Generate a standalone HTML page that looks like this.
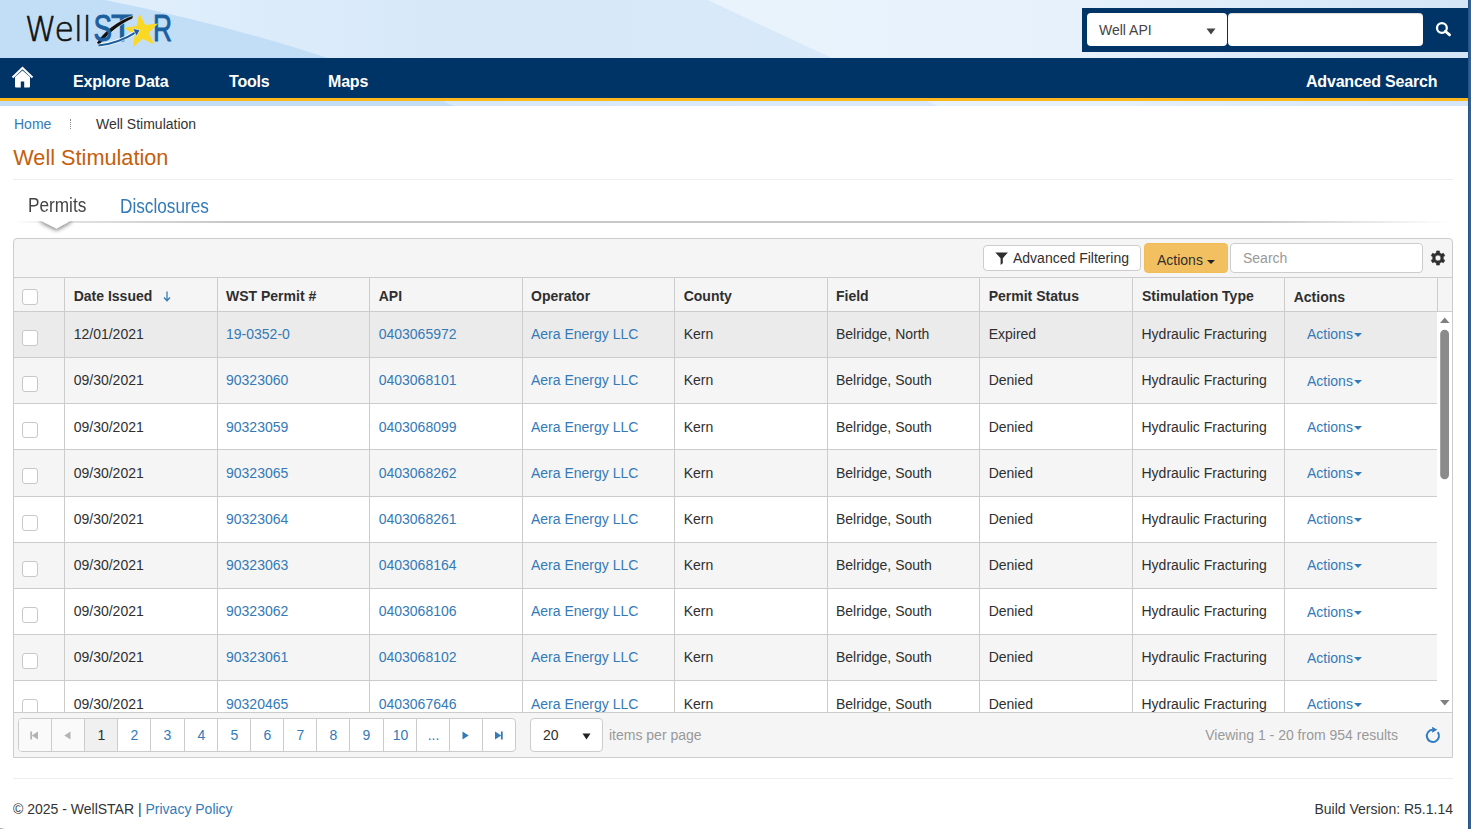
<!DOCTYPE html>
<html lang="en">
<head>
<meta charset="utf-8">
<title>Well Stimulation - WellSTAR</title>
<style>
*{box-sizing:border-box}
html,body{margin:0;padding:0}
body{width:1471px;height:829px;overflow:hidden;position:relative;background:#fff;font-family:"Liberation Sans",Arial,sans-serif;font-size:14px;color:#333;line-height:20px}
a{color:#337ab7;text-decoration:none}
.abs{position:absolute}
#edge{left:1468px;top:0;width:3px;height:829px;background:linear-gradient(to right,#23538a 0,#23538a 1px,#34608e 1px)}
#hdr{left:0;top:0;width:1468px;height:106px;background:#c2def7;overflow:hidden}
#nav{left:0;top:58px;width:1468px;height:43px;background:#003366;border-bottom:3px solid #fdb81e}
#nav .item{position:absolute;top:0;height:40px;line-height:47px;letter-spacing:-.2px;color:#fff;font-weight:bold;font-size:16px;white-space:nowrap}
#sbox{left:1082px;top:8px;width:386px;height:44px;background:#003366}
#sbox .sel{position:absolute;left:5px;top:5px;width:140px;height:33px;background:#fff;border-radius:4px;line-height:34px;padding-left:12px;font-size:14px;color:#444}
#sbox .inp{position:absolute;left:146px;top:5px;width:195px;height:33px;background:#fff;border-radius:4px;box-shadow:inset 0 1px 1px rgba(0,0,0,.15)}
.hr{height:1px;background:#eee}
#crumb{left:14px;top:114px;height:20px;white-space:nowrap}
#title{left:13.300px;top:144px;font-size:21.7px;line-height:28px;color:#c4600c;white-space:nowrap}
.tab{font-size:20px;line-height:26px;white-space:nowrap;transform-origin:0 50%;transform:scaleX(.86)}
#grid{left:13px;top:238px;width:1440px;height:520px;border:1px solid #ccc;background:#f5f5f5;border-radius:4px 4px 0 0;overflow:hidden}
#tb{left:0;top:0;width:1438px;height:39px;border-bottom:1px solid #ccc}
#thead{left:0;top:39px;width:1438px;height:34px;border-bottom:1px solid #ccc;background:#f5f5f5}
#thead div{position:absolute;top:0;height:33px;border-left:1px solid #ccc;font-weight:bold;font-size:14px;line-height:36px;padding-left:8px;color:#2f2f2f;white-space:nowrap}
#rows{left:0;top:73px;width:1423px;height:400px;overflow:hidden;background:#fff}
.r{position:relative;height:46px;width:1424px;border-bottom:1px solid #ccc;background:#fff}
.r.alt{background:#f5f5f5}
.r.sel{background:#ebebeb}
.r div{position:absolute;top:0;bottom:0;border-left:1px solid #ccc;line-height:var(--lh,44px);padding-left:8px;white-space:nowrap;font-size:14px;color:#2f2f2f}
.r div.c0{border-left:0;padding:0}
.cb{position:absolute;display:block;width:16px;height:16px;border:1px solid #c8c8c8;border-radius:3px;background:#fff}
.c0{left:0;width:51px}.c1{left:50px;width:153px}.c2{left:203px;width:152px}.c3{left:355px;width:153px}.c4{left:508px;width:152px}.c5{left:660px;width:153px}.c6{left:813px;width:152px}.c7{left:965px;width:153px}.c8{left:1118px;width:152px}.c9{left:1270px;width:154px}
.r div.c9{padding-left:22px}
.r div.c1,.r div.c3,.r div.c5,.r div.c7,#thead div.c1,#thead div.c3,#thead div.c5,#thead div.c7,#thead div.c9{padding-left:8.7px}
#thead div.c9{line-height:38px}
#thead div.c8{padding-left:9px}
.r div.c8{padding-left:8.5px}
.caret{display:inline-block;width:0;height:0;border-left:4px solid transparent;border-right:4px solid transparent;border-top:4px solid #337ab7;vertical-align:middle;margin-left:1px}
#vs{left:1423px;top:73px;width:15px;height:400px;background:#fff}
#pager{left:0;top:473px;width:1438px;height:45px;border-top:1px solid #ccc;background:#f5f5f5}
#pg{left:4px;top:5px;height:34px;width:498px;border:1px solid #ccc;border-radius:4px;background:#fff;overflow:hidden}
#pg span{position:absolute;top:0;height:32px;width:34px;border-left:1px solid #ccc;text-align:center;line-height:33px;color:#337ab7;font-size:14px}
#foot{left:13px;top:799px;width:1440px;height:20px;white-space:nowrap}
</style>
</head>
<body>
<div id="hdr" class="abs">
  <svg class="abs" style="left:0;top:0" width="1468" height="106" viewBox="0 0 1468 106">
    <defs>
      <linearGradient id="sw1" x1="0" y1="0" x2="1" y2="0">
        <stop offset="0" stop-color="#e1effb"/><stop offset=".25" stop-color="#d7e8f9"/><stop offset="1" stop-color="#dcebfa"/>
      </linearGradient>
      <linearGradient id="sw2" x1="0" y1="0" x2="1" y2="0">
        <stop offset="0" stop-color="#e9f3fc"/><stop offset=".5" stop-color="#e6f1fb"/><stop offset="1" stop-color="#d3e5f7"/>
      </linearGradient>
    </defs>
    <path d="M105 0 Q301.500 39.500 454 106 L1468 106 L1468 0 Z" fill="url(#sw1)"/>
    <path d="M708 0 Q830 58 938 106 L1468 106 L1468 0 Z" fill="url(#sw2)"/>
  </svg>
  <div id="nav" class="abs">
    <svg class="abs" style="left:11px;top:8px" width="24" height="24" viewBox="0 0 24 24"><path d="M1.5 11.5 L11.5 2 L21.5 11.5" fill="none" stroke="#fff" stroke-width="2"/><path d="M4 11 L11.5 4.400 L19 11 V20.500 Q19 21.500 18 21.500 H13.200 V15.500 H9.800 V21.500 H5 Q4 21.500 4 20.500 Z" fill="#fff"/></svg>
    <div class="item" style="left:73px">Explore Data</div>
    <div class="item" style="left:229px">Tools</div>
    <div class="item" style="left:328px">Maps</div>
    <div class="item" style="left:1306px">Advanced Search</div>
  </div>
  <div id="sbox" class="abs">
    <div class="sel">Well API<svg class="abs" style="left:118.500px;top:15px" width="10" height="7" viewBox="0 0 10 7"><path d="M0.5 0.5 H9.5 L5 6.5 Z" fill="#444"/></svg></div>
    <div class="inp"></div>
    <svg class="abs" style="left:352px;top:12px" width="20" height="20" viewBox="0 0 20 20"><circle cx="7.900" cy="8" r="4.900" fill="none" stroke="#fff" stroke-width="2.300"/><path d="M11.300 11.300 L15.600 14.900" stroke="#fff" stroke-width="2.800" stroke-linecap="round"/></svg>
  </div>
  <svg id="logo" class="abs" style="left:0;top:0" width="200" height="58" viewBox="0 0 200 58">
    <text x="25" y="41.400" font-family="'DejaVu Sans Light','DejaVu Sans',sans-serif" font-weight="200" font-size="34" fill="#111" stroke="#111" stroke-width=".7" textLength="66.500" lengthAdjust="spacingAndGlyphs">Well</text>
    <text x="111" y="41.400" font-family="'Liberation Sans',sans-serif" font-size="36" fill="#1c5f9f" stroke="#1c5f9f" stroke-width=".9" textLength="22" lengthAdjust="spacingAndGlyphs">T</text>
    <path d="M133.500 15.300 C118 20 103 32 96.800 42.500 C97.500 44.800 99 45.300 100.300 44.500 C105 36.500 119 24.500 132.500 18.800 Z" fill="#111" stroke="#fff" stroke-width=".6"/>
    <text x="93.500" y="41.400" font-family="'Liberation Sans',sans-serif" font-size="36" fill="#1c5f9f" stroke="#1c5f9f" stroke-width=".9" textLength="18.500" lengthAdjust="spacingAndGlyphs">S</text>
    <text x="153" y="41.400" font-family="'Liberation Sans',sans-serif" font-size="36" fill="#1c5f9f" stroke="#1c5f9f" stroke-width=".9" textLength="19" lengthAdjust="spacingAndGlyphs">R</text>
    <polygon points="139.300,13.300 145.200,24.900 158.100,23.600 148.900,32.800 154.100,44.600 142.500,38.700 132.900,47.400 134.900,34.600 123.700,28.000 136.500,26.000" fill="#fbd824"/>
    <path d="M98.500 45.500 C112 44 127 38 137 31.500" fill="none" stroke="#fff" stroke-width="3.400"/>
    <path d="M98.500 45.500 C112 44 127 38 136.500 31.800" fill="none" stroke="#1c5f9f" stroke-width="2"/>
    <path d="M132.800 28.500 L140 30 L136.500 36.200 Z" fill="#1c5f9f" stroke="#fff" stroke-width=".6"/>
  </svg>
</div>
<div id="edge" class="abs"></div>
<div class="abs" style="left:0;top:828px;width:5px;height:1px;background:linear-gradient(to right,#999,#fff)"></div>

<div id="crumb" class="abs"><a class="abs" style="left:0;top:0">Home</a><span class="abs" style="left:56px;top:5px;height:10px;border-left:1px dotted #888"></span><span class="abs" style="left:82px;top:0;color:#333">Well Stimulation</span></div>
<div id="title" class="abs">Well Stimulation</div>
<div class="abs hr" style="left:13px;top:179px;width:1440px"></div>

<div class="abs tab" style="left:28px;top:192px;color:#444">Permits</div>
<div class="abs tab" style="left:119.700px;top:193px;color:#337ab7"><a>Disclosures</a></div>
<div class="abs" style="left:13px;top:221px;width:1440px;height:2px;background:linear-gradient(to right,rgba(200,200,200,0) 0,rgba(200,200,200,.55) 60px,#c8c8c8 220px,#c8c8c8 1250px,rgba(200,200,200,0) 1438px)"></div>
<svg class="abs" style="left:30px;top:220px" width="54" height="16" viewBox="0 0 54 16"><defs><filter id="ash" x="-40%" y="-100%" width="180%" height="400%"><feGaussianBlur in="SourceAlpha" stdDeviation="2.200"/><feOffset dy="2"/><feComponentTransfer><feFuncA type="linear" slope=".5"/></feComponentTransfer><feMerge><feMergeNode/><feMergeNode in="SourceGraphic"/></feMerge></filter><clipPath id="acl"><rect x="0" y="1" width="54" height="15"/></clipPath></defs><g clip-path="url(#acl)"><path d="M10.500 -2 H41 V0.500 L26.500 8.500 L10.500 0.500 Z" fill="#fff" filter="url(#ash)"/></g></svg>

<div id="grid" class="abs">
  <div id="tb" class="abs">
    <div class="abs" style="left:969px;top:6px;width:158px;height:26px;border:1px solid #ccc;border-radius:4px;background:#fff;line-height:24px;font-size:14px;color:#2f2f2f;white-space:nowrap"><svg class="abs" style="left:11px;top:6px" width="13" height="13" viewBox="0 0 13 13"><path d="M0.300 0.400 H12.900 L7.800 6.200 V11.300 L5.600 12.900 V6.200 Z" fill="#2f2f2f"/></svg><span class="abs" style="left:29px;top:0">Advanced Filtering</span></div>
    <div class="abs" style="left:1130px;top:4px;width:84px;height:30px;border:1px solid #f1bb58;border-radius:4px;background:#f3c061;line-height:32px;font-size:14px;color:#2f2f2f;white-space:nowrap"><span class="abs" style="left:12px;top:0">Actions</span><span class="abs" style="left:62px;top:16px;width:0;height:0;border-left:4px solid transparent;border-right:4px solid transparent;border-top:4px solid #222"></span></div>
    <div class="abs" style="left:1216px;top:4px;width:193px;height:30px;border:1px solid #ccc;border-radius:4px;background:#fff;line-height:28px;font-size:14px;color:#999;padding-left:12px">Search</div>
    <svg class="abs" style="left:1414.9px;top:10.0px" width="18" height="18" viewBox="0 0 18 18"><path fill="#2f2f2f" fill-rule="evenodd" stroke="#2f2f2f" stroke-width=".6" stroke-linejoin="round" d="M10.73 3.99 L10.37 1.93 L7.63 1.93 L7.27 3.99 L5.52 5.00 L3.57 4.28 L2.19 6.66 L3.80 7.99 L3.80 10.01 L2.19 11.34 L3.57 13.72 L5.52 13.00 L7.27 14.01 L7.63 16.07 L10.37 16.07 L10.73 14.01 L12.48 13.00 L14.43 13.72 L15.81 11.34 L14.20 10.01 L14.20 7.99 L15.81 6.66 L14.43 4.28 L12.48 5.00 Z M6.10 9.00 a2.900 2.900 0 1 0 5.800 0 a2.900 2.900 0 1 0 -5.800 0 Z"/></svg>
  </div>
  <div id="thead" class="abs"><div class="c0" style="border-left:0;padding:0"><span class="cb" style="left:8px;top:11px"></span></div><div class="c1">Date Issued <svg style="margin-left:7px;vertical-align:-1px" width="8" height="11" viewBox="0 0 8 11"><path d="M4 0.5 V9.5 M1 6.5 L4 9.8 L7 6.5" fill="none" stroke="#337ab7" stroke-width="1.3"/></svg></div><div class="c2">WST Permit #</div><div class="c3">API</div><div class="c4">Operator</div><div class="c5">County</div><div class="c6">Field</div><div class="c7">Permit Status</div><div class="c8">Stimulation Type</div><div class="c9">Actions</div><div style="left:1423px;width:15px;padding:0"></div></div>
  <div id="rows" class="abs">
    <div class="r sel"><div class="c0"><span class="cb" style="left:8px;top:18px"></span></div><div class="c1">12/01/2021</div><div class="c2"><a>19-0352-0</a></div><div class="c3"><a>0403065972</a></div><div class="c4"><a>Aera Energy LLC</a></div><div class="c5">Kern</div><div class="c6">Belridge, North</div><div class="c7">Expired</div><div class="c8">Hydraulic Fracturing</div><div class="c9"><a>Actions<span class="caret"></span></a></div></div>
    <div class="r alt"><div class="c0"><span class="cb" style="left:8px;top:18px"></span></div><div class="c1">09/30/2021</div><div class="c2"><a>90323060</a></div><div class="c3"><a>0403068101</a></div><div class="c4"><a>Aera Energy LLC</a></div><div class="c5">Kern</div><div class="c6">Belridge, South</div><div class="c7">Denied</div><div class="c8">Hydraulic Fracturing</div><div class="c9" style="line-height:46px"><a>Actions<span class="caret"></span></a></div></div>
    <div class="r" style="--lh:46px"><div class="c0"><span class="cb" style="left:8px;top:18px"></span></div><div class="c1">09/30/2021</div><div class="c2"><a>90323059</a></div><div class="c3"><a>0403068099</a></div><div class="c4"><a>Aera Energy LLC</a></div><div class="c5">Kern</div><div class="c6">Belridge, South</div><div class="c7">Denied</div><div class="c8">Hydraulic Fracturing</div><div class="c9"><a>Actions<span class="caret"></span></a></div></div>
    <div class="r alt" style="height:47px;--lh:46px"><div class="c0"><span class="cb" style="left:8px;top:18px"></span></div><div class="c1">09/30/2021</div><div class="c2"><a>90323065</a></div><div class="c3"><a>0403068262</a></div><div class="c4"><a>Aera Energy LLC</a></div><div class="c5">Kern</div><div class="c6">Belridge, South</div><div class="c7">Denied</div><div class="c8">Hydraulic Fracturing</div><div class="c9"><a>Actions<span class="caret"></span></a></div></div>
    <div class="r"><div class="c0"><span class="cb" style="left:8px;top:18px"></span></div><div class="c1">09/30/2021</div><div class="c2"><a>90323064</a></div><div class="c3"><a>0403068261</a></div><div class="c4"><a>Aera Energy LLC</a></div><div class="c5">Kern</div><div class="c6">Belridge, South</div><div class="c7">Denied</div><div class="c8">Hydraulic Fracturing</div><div class="c9"><a>Actions<span class="caret"></span></a></div></div>
    <div class="r alt"><div class="c0"><span class="cb" style="left:8px;top:18px"></span></div><div class="c1">09/30/2021</div><div class="c2"><a>90323063</a></div><div class="c3"><a>0403068164</a></div><div class="c4"><a>Aera Energy LLC</a></div><div class="c5">Kern</div><div class="c6">Belridge, South</div><div class="c7">Denied</div><div class="c8">Hydraulic Fracturing</div><div class="c9"><a>Actions<span class="caret"></span></a></div></div>
    <div class="r"><div class="c0"><span class="cb" style="left:8px;top:18px"></span></div><div class="c1">09/30/2021</div><div class="c2"><a>90323062</a></div><div class="c3"><a>0403068106</a></div><div class="c4"><a>Aera Energy LLC</a></div><div class="c5">Kern</div><div class="c6">Belridge, South</div><div class="c7">Denied</div><div class="c8">Hydraulic Fracturing</div><div class="c9" style="line-height:46px"><a>Actions<span class="caret"></span></a></div></div>
    <div class="r alt"><div class="c0"><span class="cb" style="left:8px;top:18px"></span></div><div class="c1">09/30/2021</div><div class="c2"><a>90323061</a></div><div class="c3"><a>0403068102</a></div><div class="c4"><a>Aera Energy LLC</a></div><div class="c5">Kern</div><div class="c6">Belridge, South</div><div class="c7">Denied</div><div class="c8">Hydraulic Fracturing</div><div class="c9" style="line-height:46px"><a>Actions<span class="caret"></span></a></div></div>
    <div class="r" style="--lh:46px"><div class="c0"><span class="cb" style="left:8px;top:18px"></span></div><div class="c1">09/30/2021</div><div class="c2"><a>90320465</a></div><div class="c3"><a>0403067646</a></div><div class="c4"><a>Aera Energy LLC</a></div><div class="c5">Kern</div><div class="c6">Belridge, South</div><div class="c7">Denied</div><div class="c8">Hydraulic Fracturing</div><div class="c9"><a>Actions<span class="caret"></span></a></div></div>
  </div>
  <div id="vs" class="abs"><svg class="abs" style="left:0;top:0" width="15" height="400" viewBox="0 0 15 400"><path d="M3 11 H12.500 L7.750 5.500 Z" fill="#808080"/><rect x="3.200" y="17.700" width="8.800" height="149.500" rx="4.400" fill="#8b8b8b"/><path d="M3 388 H12.500 L7.750 393.500 Z" fill="#808080"/></svg></div>
  <div id="pager" class="abs"><div id="pg" class="abs"><span style="left:-1px;background:#fafafa;"><svg width="9" height="9" viewBox="0 0 9 9" style="vertical-align:0.5px;position:relative;left:-1px"><path d="M1.200 0.500 V8.500" stroke="#b3b3b3" stroke-width="1.800"/><path d="M8 0.500 V8.500 L1.800 4.500 Z" fill="#b3b3b3"/></svg></span><span style="left:32px;background:#fafafa;"><svg width="9" height="9" viewBox="0 0 9 9" style="vertical-align:0.5px;position:relative;left:-1px"><path d="M7.500 0.500 V8.500 L1.300 4.500 Z" fill="#b3b3b3"/></svg></span><span style="left:65px;background:#f0f0f0;color:#2f2f2f;">1</span><span style="left:98px;">2</span><span style="left:131px;">3</span><span style="left:165px;">4</span><span style="left:198px;">5</span><span style="left:231px;">6</span><span style="left:264px;">7</span><span style="left:297px;">8</span><span style="left:330px;">9</span><span style="left:364px;">10</span><span style="left:397px;">...</span><span style="left:430px;"><svg width="9" height="9" viewBox="0 0 9 9" style="vertical-align:0.5px;position:relative;left:-1px"><path d="M1.500 0.500 V8.500 L7.700 4.500 Z" fill="#337ab7"/></svg></span><span style="left:463px;"><svg width="9" height="9" viewBox="0 0 9 9" style="vertical-align:0.5px;position:relative;left:-1px"><path d="M7.800 0.500 V8.500" stroke="#337ab7" stroke-width="1.800"/><path d="M1 0.500 V8.500 L7.200 4.500 Z" fill="#337ab7"/></svg></span></div><div class="abs" style="left:516px;top:5px;width:73px;height:34px;border:1px solid #ccc;border-radius:4px;background:#fff;line-height:33px;font-size:14px;color:#2f2f2f;padding-left:12px">20<svg class="abs" style="left:51px;top:14px" width="9" height="7" viewBox="0 0 9 7"><path d="M0.500 0.500 H8.500 L4.500 6.500 Z" fill="#222"/></svg></div><span class="abs" style="left:595px;top:12px;color:#999;font-size:14px;white-space:nowrap">items per page</span><span class="abs" style="right:54px;top:12px;color:#999;font-size:14px;white-space:nowrap">Viewing 1 - 20 from 954 results</span><svg class="abs" style="left:1408px;top:12px" width="22" height="22" viewBox="0 0 22 22"><path d="M15.71 7.09 A6.1 6.1 0 1 1 10.60 4.75" fill="none" stroke="#2f7cc4" stroke-width="2"/><path d="M10.20 1.85 L15.30 4.75 L10.20 7.65 Z" fill="#2f7cc4"/></svg></div>
</div>

<div class="abs hr" style="left:13px;top:778px;width:1440px"></div>
<div id="foot" class="abs"><span class="abs" style="left:0;top:0">© 2025 - WellSTAR | <a>Privacy Policy</a></span><span class="abs" style="right:0;top:0">Build Version: R5.1.14</span></div>
</body>
</html>
